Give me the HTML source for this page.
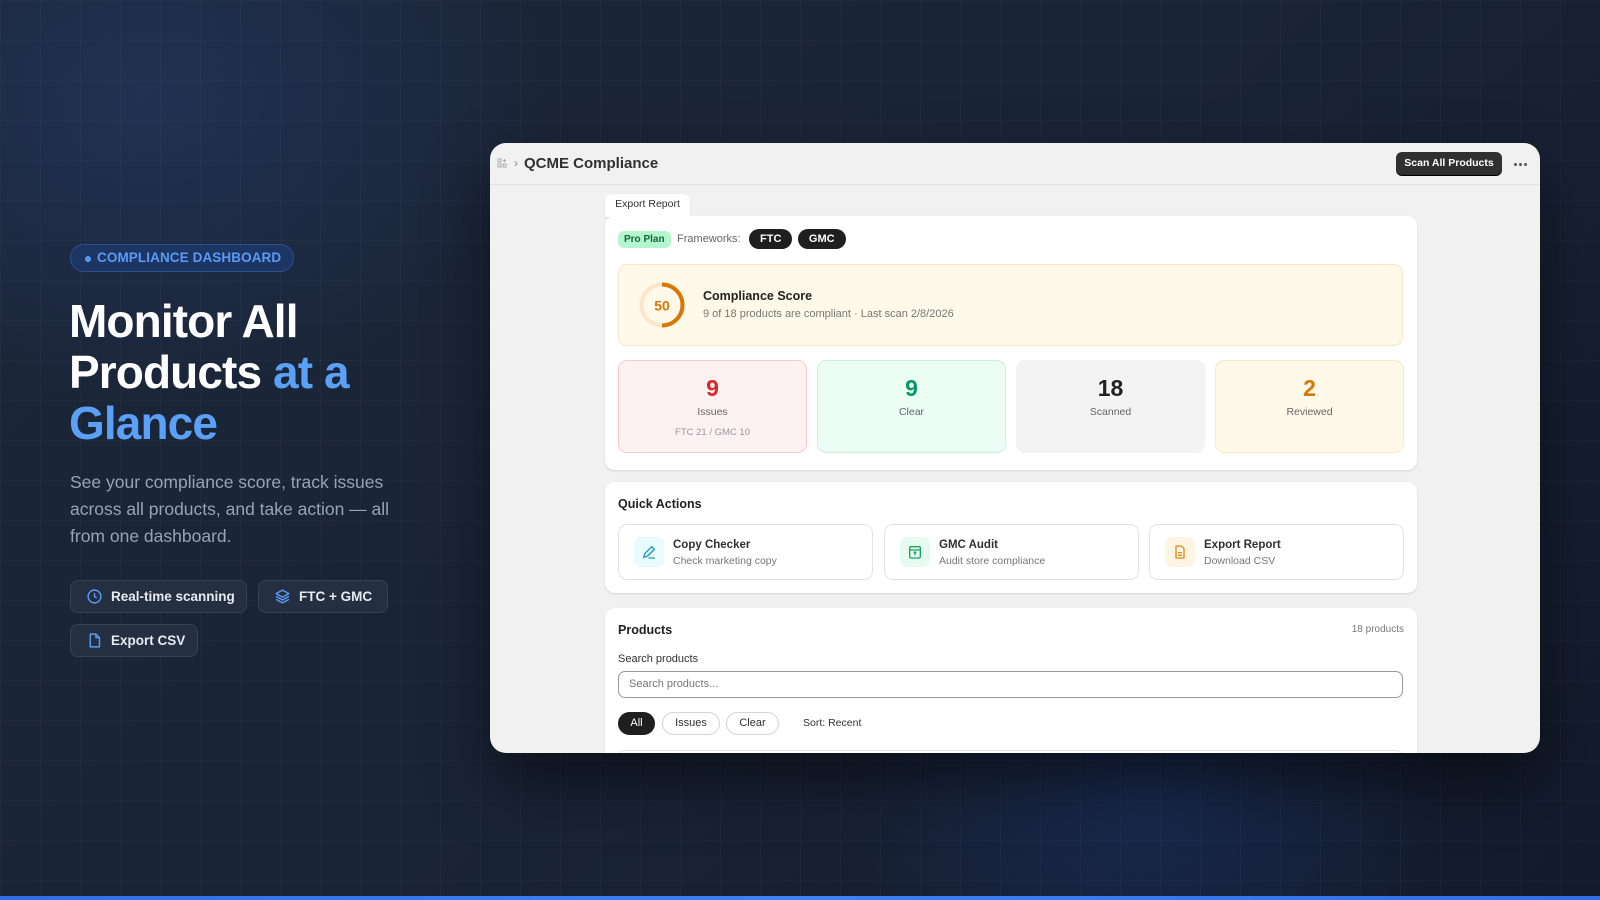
<!DOCTYPE html>
<html><head><meta charset="utf-8"><style>
*{box-sizing:border-box;margin:0;padding:0}
body{width:1600px;height:900px;overflow:hidden;font-family:"Liberation Sans",sans-serif;position:relative;
background:radial-gradient(ellipse 400px 300px at 150px 100px,rgba(40,70,130,.35),transparent),radial-gradient(ellipse 300px 250px at 1150px 800px,rgba(30,60,130,.35),transparent),linear-gradient(135deg,#1c2638 0%,#1a2437 50%,#121a2b 100%);}
.grid{position:absolute;inset:0;background-image:linear-gradient(rgba(255,255,255,.025) 1px,transparent 1px),linear-gradient(90deg,rgba(255,255,255,.025) 1px,transparent 1px);background-size:40px 40px}
.bar{position:absolute;left:0;right:0;bottom:0;height:4px;background:linear-gradient(90deg,#2f6ee8,#3b82f6,#2f6ee8)}
.badge{position:absolute;left:70px;top:244px;width:224px;height:28px;border-radius:14px;background:#1d3563;border:1px solid #2b4f8f;color:#5b9bf5;font-weight:700;font-size:13.5px;line-height:26px;padding-left:26px;letter-spacing:.1px}
.badge:before{content:"";position:absolute;left:14px;top:11px;width:6px;height:6px;border-radius:3px;background:#5b9bf5}
h1{position:absolute;left:69px;top:296px;font-size:46px;line-height:51px;color:#fff;font-weight:700;letter-spacing:-0.9px;width:380px}
h1 span{color:#5aa0f7}
.p{position:absolute;left:70px;top:469px;width:350px;font-size:17.5px;line-height:27px;color:#98a3b5}
.chip{position:absolute;height:33px;border-radius:8px;background:#252f42;border:1px solid #364154;color:#e7ebf1;font-size:13.5px;font-weight:700;line-height:31px;padding-left:40px;white-space:nowrap}
.chip svg{position:absolute;left:15px;top:7px}
.win{position:absolute;left:490px;top:143px;width:1050px;height:610px;background:#f1f1f1;border-radius:16px;overflow:hidden;box-shadow:0 30px 60px rgba(0,0,0,.5)}
.tb{height:42px;border-bottom:1px solid #e3e3e3;position:relative}
.tb .t{position:absolute;left:34px;top:12px;font-size:15px;font-weight:700;color:#303030}
.scan{position:absolute;left:906px;top:9px;width:106px;height:23px;background:#303030;border-radius:6px;color:#fff;font-size:10.5px;font-weight:700;text-align:center;line-height:23px;box-shadow:0 1px 0 #000}
.dots{position:absolute;left:1024px;top:20px;width:14px;height:3px}
.dots i{position:absolute;top:0;width:3px;height:3px;border-radius:2px;background:#555}
.card{position:absolute;background:#fff;border-radius:10px;box-shadow:0 1px 2px rgba(0,0,0,.12)}
.pill{display:inline-block;height:20px;border-radius:10px;font-size:11px;font-weight:700;line-height:20px;padding:0 11px;vertical-align:middle}
.stat{position:absolute;top:144px;width:189px;height:93px;border-radius:9px;text-align:center;border:1px solid transparent}
.stat b{display:block;margin-top:13px;font-size:23px;line-height:28px}
.stat i{display:block;font-style:normal;font-size:10.5px;color:#666;margin-top:4px}
.stat s{display:block;text-decoration:none;font-size:9.5px;color:#999;margin-top:9px}
.tile{position:absolute;top:42px;height:56px;width:255px;border:1px solid #e3e3e3;border-radius:9px}
.ic{position:absolute;left:15px;top:12px;width:30px;height:30px;border-radius:7px}
.ic svg{position:absolute;left:7px;top:7px}
.tile b{position:absolute;left:54px;top:14px;font-size:11.5px;color:#303030}
.tile i{position:absolute;left:54px;top:30px;font-style:normal;font-size:10.5px;color:#777}
.fp{position:absolute;top:104px;height:23px;border-radius:12px;border:1px solid #d5d5d5;font-size:11px;line-height:21px;text-align:center;color:#303030}
</style></head><body>
<div class="grid"></div>
<div class="badge">COMPLIANCE DASHBOARD</div>
<h1>Monitor All Products <span>at a Glance</span></h1>
<div class="p">See your compliance score, track issues across all products, and take action — all from one dashboard.</div>
<div class="chip" style="left:70px;top:580px;width:177px"><svg width="17" height="17" viewBox="0 0 24 24" fill="none" stroke="#5b9bf5" stroke-width="2"><circle cx="12" cy="12" r="9"/><path d="M12 7v5l3 2"/></svg>Real-time scanning</div>
<div class="chip" style="left:258px;top:580px;width:130px"><svg width="17" height="17" viewBox="0 0 24 24" fill="none" stroke="#5b9bf5" stroke-width="2" stroke-linejoin="round"><path d="M12 3l9 5-9 5-9-5z"/><path d="M3 12l9 5 9-5"/><path d="M3 16l9 5 9-5"/></svg>FTC + GMC</div>
<div class="chip" style="left:70px;top:624px;width:128px"><svg width="17" height="17" viewBox="0 0 24 24" fill="none" stroke="#5b9bf5" stroke-width="2" stroke-linejoin="round"><path d="M6 3h8l5 5v13H6z"/><path d="M14 3v5h5"/></svg>Export CSV</div>

<div class="win">
 <div class="tb">
  <svg style="position:absolute;left:7px;top:15px" width="10" height="11" viewBox="0 0 10 11" fill="none" stroke="#aaa" stroke-width="1"><rect x="1" y="1" width="3" height="3"/><rect x="1" y="6" width="3" height="3"/><rect x="6" y="6" width="3" height="3"/><path d="M7.5 1v3M6 2.5h3"/></svg>
  <span style="position:absolute;left:24px;top:13px;font-size:12px;color:#888">›</span>
  <div class="t">QCME Compliance</div>
  <div class="scan">Scan All Products</div>
  <div class="dots"><i style="left:0"></i><i style="left:5px"></i><i style="left:10px"></i></div>
 </div>
 <div class="card" style="left:115px;top:51px;width:85px;height:23px;border-radius:7px 7px 0 0;font-size:10.5px;line-height:21px;text-align:center;color:#303030">Export Report</div>
 <div class="card" style="left:115px;top:73px;width:812px;height:254px">
  <div style="position:absolute;left:13px;top:13px;white-space:nowrap">
   <span class="pill" style="background:#b5f5cf;color:#0d6b35;padding:0 6px;border-radius:6px;font-size:10px;height:17px;line-height:17px">Pro Plan</span>
   <span style="font-size:11px;color:#666;vertical-align:middle;margin:0 4px 0 2px">Frameworks:</span>
   <span class="pill" style="background:#1f1f1f;color:#fff">FTC</span>
   <span class="pill" style="background:#1f1f1f;color:#fff;margin-left:1px">GMC</span>
  </div>
  <div style="position:absolute;left:13px;top:48px;width:785px;height:82px;background:#fef9e8;border:1px solid #f8e6c4;border-radius:9px">
   <svg style="position:absolute;left:20px;top:17px" width="46" height="46" viewBox="0 0 46 46"><circle cx="23" cy="23" r="20.5" fill="none" stroke="#fbe6cc" stroke-width="4"/><path d="M23 2.5a20.5 20.5 0 0 1 0 41" fill="none" stroke="#d97706" stroke-width="4"/><text x="23" y="28.5" text-anchor="middle" font-family="Liberation Sans" font-weight="700" font-size="14" fill="#d97706">50</text></svg>
   <div style="position:absolute;left:84px;top:24px;font-size:12.5px;font-weight:700;color:#222">Compliance Score</div>
   <div style="position:absolute;left:84px;top:43px;font-size:11px;color:#777">9 of 18 products are compliant · Last scan 2/8/2026</div>
  </div>
  <div class="stat" style="left:13px;background:#fef1f1;border-color:#f8caca"><b style="color:#dc2626">9</b><i>Issues</i><s>FTC 21 / GMC 10</s></div>
  <div class="stat" style="left:212px;background:#ecfdf4;border-color:#c8f0da"><b style="color:#059669">9</b><i>Clear</i></div>
  <div class="stat" style="left:411px;background:#f3f3f3"><b style="color:#222">18</b><i>Scanned</i></div>
  <div class="stat" style="left:610px;background:#fef9e8;border-color:#f8ecc4"><b style="color:#d97706">2</b><i>Reviewed</i></div>
 </div>
 <div class="card" style="left:115px;top:339px;width:812px;height:111px">
  <div style="position:absolute;left:13px;top:15px;font-size:12.5px;font-weight:700;color:#222">Quick Actions</div>
  <div class="tile" style="left:13px"><div class="ic" style="background:#e9fbfd"><svg width="16" height="16" viewBox="0 0 24 24" fill="none" stroke="#1b9ab8" stroke-width="2" stroke-linecap="round"><path d="M4 20l2-6L16 4l4 4-10 10z"/><path d="M12 21h8"/></svg></div><b>Copy Checker</b><i>Check marketing copy</i></div>
  <div class="tile" style="left:279px"><div class="ic" style="background:#e7faf0"><svg width="16" height="16" viewBox="0 0 24 24" fill="none" stroke="#16a36a" stroke-width="2"><rect x="4" y="4" width="16" height="17" rx="2"/><path d="M4 9h16M12 12v5M10 13l2-1 2 1"/></svg></div><b>GMC Audit</b><i>Audit store compliance</i></div>
  <div class="tile" style="left:544px"><div class="ic" style="background:#fff5e3"><svg width="16" height="16" viewBox="0 0 24 24" fill="none" stroke="#e08a17" stroke-width="2" stroke-linejoin="round"><path d="M6 3h8l4 4v14H6z"/><path d="M9 13h6M9 17h6"/></svg></div><b>Export Report</b><i>Download CSV</i></div>
 </div>
 <div class="card" style="left:115px;top:465px;width:812px;height:170px">
  <div style="position:absolute;left:13px;top:15px;font-size:12.5px;font-weight:700;color:#222">Products</div>
  <div style="position:absolute;right:13px;top:16px;font-size:10px;color:#777">18 products</div>
  <div style="position:absolute;left:13px;top:45px;font-size:11px;color:#303030">Search products</div>
  <div style="position:absolute;left:13px;top:63px;width:785px;height:27px;border:1px solid #999;border-radius:7px;font-size:11px;color:#777;line-height:25px;padding-left:10px">Search products...</div>
  <div class="fp" style="left:13px;width:37px;background:#1f1f1f;color:#fff;border-color:#1f1f1f">All</div>
  <div class="fp" style="left:57px;width:58px">Issues</div>
  <div class="fp" style="left:121px;width:53px">Clear</div>
  <div style="position:absolute;left:198px;top:109px;font-size:10.5px;color:#303030">Sort: Recent</div>
  <div style="position:absolute;left:13px;top:142px;width:785px;height:30px;border:1px solid #e3e3e3;border-radius:7px"></div>
 </div>
</div>
<div class="bar"></div>
</body></html>
